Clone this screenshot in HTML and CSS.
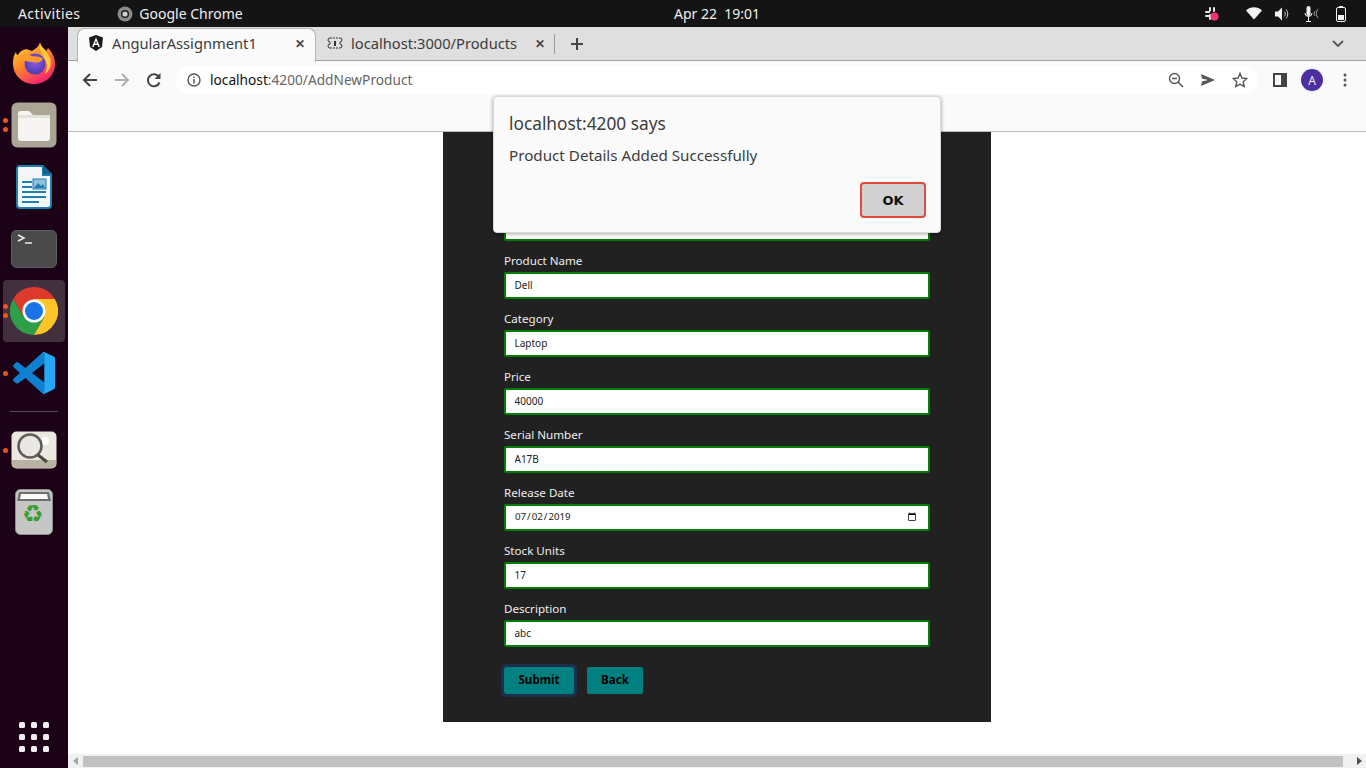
FILE: index.html
```html
<!DOCTYPE html>
<html lang="en">
<head>
  <meta charset="UTF-8">
  <title>AngularAssignment1</title>
  <link rel="stylesheet" href="styles.css">
</head>
<body>
  <header class="topbar">
    <div class="topbar-left">
      <span class="activities">Activities</span>
      <span class="app-name">
        <svg class="app-icon" width="16" height="16" viewBox="0 0 16 16"><circle cx="8" cy="8" r="7.5" fill="#8a8a8a"/><circle cx="8" cy="8" r="4" fill="#1a1a1a"/><circle cx="8" cy="8" r="2.6" fill="#cfcfcf"/></svg>
        Google Chrome
      </span>
    </div>
    <div class="clock">Apr 22&nbsp;&nbsp;19:01</div>
    <div class="tray">
      <svg class="tray-slack" width="16" height="16" viewBox="0 0 16 16"><g stroke="#e8e8e8" stroke-width="2" stroke-linecap="round"><path d="M6 2v2.500M2 6h3M10 2v3M2 10h3M6 9v4"/></g><circle cx="10.500" cy="10.500" r="4" fill="#f0337a"/></svg>
      <svg class="tray-wifi" width="16" height="13" viewBox="0 0 16 13"><path d="M0 3.500C4.500-.8 11.500-.8 16 3.500L8 12.500z" fill="#f2f2f2"/></svg>
      <svg class="tray-vol" width="15" height="14" viewBox="0 0 15 14"><path d="M0 4.500h3l4-4v13l-4-4H0z" fill="#f2f2f2"/><path d="M9 4.500a3 3 0 0 1 0 5M11 2.500a6.500 6.500 0 0 1 0 9" fill="none" stroke="#cfcfcf"/></svg>
      <svg class="tray-mic" width="17" height="16" viewBox="0 0 17 16"><rect x="2.500" y="0" width="4" height="10" rx="2" fill="#f2f2f2"/><path d="M1 7a3.500 3.500 0 0 0 7 0M4.500 10.500V15M2 15.500h5" fill="none" stroke="#f2f2f2"/><path d="M11 5a4 4 0 0 0 0 5M14 3a7 7 0 0 0 0 9" fill="none" stroke="#9a9a9a"/></svg>
      <svg class="tray-bat" width="10" height="16" viewBox="0 0 10 16"><rect x="3" y="0" width="4" height="2" fill="#f2f2f2"/><rect x=".5" y="1.500" width="9" height="14" rx="1.500" fill="none" stroke="#f2f2f2"/><rect x="2" y="9" width="6" height="5" fill="#f2f2f2"/></svg>
    </div>
  </header>

  <div class="desktop">
    <nav class="dock">
      <div class="dock-item">
        <svg width="44" height="46" viewBox="0 0 44 46">
          <defs>
            <linearGradient id="fx-a" x1="0" y1="0" x2="0.6" y2="1"><stop offset="0" stop-color="#ffd93b"/><stop offset=".5" stop-color="#ff8a2a"/><stop offset="1" stop-color="#f5256e"/></linearGradient>
            <radialGradient id="fx-b" cx=".5" cy=".4" r=".6"><stop offset="0" stop-color="#8f5be8"/><stop offset="1" stop-color="#4a3bb0"/></radialGradient>
          </defs>
          <path d="M28 2c1 4 3 6 7 9 0 0 0-2 1-3 5 5 7 11 7 16 0 11-9 20-21 20S1 35 1 23c0-5 1-8 3-11 0 2 1 3 2 3 2-4 5-5 8-6 2 1 4 1 6 2 3-2 7-4 8-9z" fill="url(#fx-a)"/>
          <circle cx="23" cy="24" r="10.500" fill="url(#fx-b)"/>
          <path d="M6 17c4-3 9-3 14-1 4 1 9 0 11 3-3 4-6 4-10 3-4 0-9-1-15-5z" fill="#ff9a2e"/>
          <path d="M28 4c2 5 7 7 10 14 2 6 0 13-5 16 3-6 2-12-1-16-2-4-5-8-4-14z" fill="#ffc93a"/>
        </svg>
      </div>
      <div class="dock-item running-2">
        <svg width="46" height="46" viewBox="0 0 46 46"><rect x="0.500" y="0.500" width="45" height="45" rx="6" fill="#aaa595"/><path d="M7 12a3 3 0 0 1 3-3h8l4 4h14a3 3 0 0 1 3 3v20a3 3 0 0 1-3 3H10a3 3 0 0 1-3-3z" fill="#f6f5f3"/><path d="M7 13h32v3H7z" fill="#e4e1da"/></svg>
      </div>
      <div class="dock-item">
        <svg width="38" height="46" viewBox="0 0 38 46"><path d="M4 1h24l9 9v31a4 4 0 0 1-4 4H5a4 4 0 0 1-4-4V4a4 4 0 0 1 3-3z" fill="#1f7fb0"/><path d="M4 3h23v9h8v29a2 2 0 0 1-2 2H5a2 2 0 0 1-2-2V5a2 2 0 0 1 1-2z" fill="#f5f8fa"/><path d="M28 1l9 9h-9z" fill="#14618a"/><path d="M7 17h10v2H7zM7 22h10v2H7zM7 27h24v2H7zM7 32h24v2H7zM7 37h17v2H7z" fill="#1f7fb0"/><rect x="18" y="15" width="13" height="10" fill="#8fc0dc" stroke="#1f7fb0"/><path d="M19 24l4-5 3 3 2-2 2 4z" fill="#1f7fb0"/></svg>
      </div>
      <div class="dock-item">
        <svg width="46" height="38" viewBox="0 0 46 38"><rect x="0.500" y="0.500" width="45" height="37" rx="5" fill="#4a4a4a" stroke="#5f5f5f"/><path d="M7 5l6 3-6 3" fill="none" stroke="#eee" stroke-width="1.500"/><path d="M14 13h7" stroke="#eee" stroke-width="1.500"/></svg>
      </div>
      <div class="dock-item active running-2">
        <svg width="48" height="48" viewBox="0 0 48 48"><path d="M24 24V12H44.800A24 24 0 0 0 3.200 12L13.600 30z" fill="#db3a2d"/><path d="M24 24L13.600 30 3.200 12A24 24 0 0 0 24 48L34.400 30z" fill="#2f9e48"/><path d="M24 24L34.400 30 24 48A24 24 0 0 0 44.800 12H24z" fill="#fcc528"/><circle cx="24" cy="24" r="11.500" fill="#fff"/><circle cx="24" cy="24" r="9" fill="#1a73e8"/></svg>
      </div>
      <div class="dock-item running-1">
        <svg width="42" height="42" viewBox="0 0 100 100"><path d="M96.500 10.800L75.900.9a6.200 6.200 0 0 0-7.100 1.200L29.600 37.800 12.500 24.900a4.200 4.200 0 0 0-5.300.2L1.700 30.100a4.200 4.200 0 0 0 0 6.200L16.500 49.800 1.700 63.300a4.200 4.200 0 0 0 0 6.200l5.500 5a4.200 4.200 0 0 0 5.300.2l17.100-13 39.200 35.700a6.200 6.200 0 0 0 7.100 1.200l20.600-9.900A6.300 6.300 0 0 0 100 83V16.600a6.300 6.300 0 0 0-3.500-5.800zM75 72.500L45.300 49.800 75 27z" fill="#0f7fd0"/><path d="M75.900.9L96.500 10.800A6.300 6.300 0 0 1 100 16.600V83a6.300 6.300 0 0 1-3.500 5.600L75.900 98.900A6.200 6.200 0 0 1 71 99.300 7 7 0 0 0 75 93V7A7 7 0 0 0 71 .7a6.200 6.200 0 0 1 4.900.2z" fill="#26a9f4"/></svg>
      </div>
      <div class="dock-sep"></div>
      <div class="dock-item running-1">
        <svg width="46" height="38" viewBox="0 0 46 38"><rect x="0.500" y="0.500" width="45" height="37" rx="5" fill="#ece8df"/><path d="M1 29h44v4a4 4 0 0 1-4 4H5a4 4 0 0 1-4-4z" fill="#b8b3a2"/><circle cx="34" cy="10" r="4" fill="#fff"/><circle cx="19" cy="15" r="11.500" fill="#e8e8e6" fill-opacity=".4" stroke="#5c5c5c" stroke-width="2.500"/><path d="M27 24l9 7" stroke="#4a4a4a" stroke-width="3"/></svg>
      </div>
      <div class="dock-item trash">
        <svg width="38" height="46" viewBox="0 0 38 46"><rect x="0.500" y="0.500" width="37" height="45" rx="5" fill="#c6c6c4" stroke="#8e8e8c"/><path d="M4 3h30l2 9H2z" fill="#6e6e6c"/><path d="M6 5h26l1 5H5z" fill="#fafafa"/></svg>
        <span class="recycle">♻</span>
      </div>
      <div class="dock-grid">
        <i></i><i></i><i></i><i></i><i></i><i></i><i></i><i></i><i></i>
      </div>
    </nav>

    <div class="browser">
      <div class="tabstrip">
        <div class="tab tab-active">
          <svg width="16" height="16" viewBox="0 0 16 16"><path d="M8 0L1 2.500 2 12l6 4 6-4 1-9.500z" fill="#1a1a1a"/><path d="M8 2.500L4 12h1.500l.8-2h3.400l.8 2H12zM6.900 8.600L8 5.800l1.100 2.800z" fill="#fff"/></svg>
          <span class="tab-title">AngularAssignment1</span>
          <span class="tab-close">✕</span>
        </div>
        <div class="tab tab-second">
          <svg width="16" height="16" viewBox="0 0 16 16"><path d="M3 3h10M3 13h10" stroke="#333" stroke-dasharray="2 1"/><path d="M3 3a2 2 0 0 0 0 4v2a2 2 0 0 0 0 4M13 3a2 2 0 0 1 0 4v2a2 2 0 0 1 0 4" fill="none" stroke="#333"/><path d="M7 6h2v5H7z" fill="#333"/></svg>
          <span class="tab-title">localhost:3000/Products</span>
          <span class="tab-close">✕</span>
        </div>
        <div class="tab-sep"></div>
        <svg class="new-tab" width="14" height="14" viewBox="0 0 14 14"><path d="M7 1v12M1 7h12" stroke="#444" stroke-width="2"/></svg>
        <svg class="tab-menu" width="12" height="8" viewBox="0 0 12 8"><path d="M1 1l5 5 5-5" fill="none" stroke="#555" stroke-width="1.800"/></svg>
      </div>

      <div class="toolbar">
        <svg width="16" height="16" viewBox="0 0 16 16"><path d="M15 8H2M8 2L2 8l6 6" fill="none" stroke="#444" stroke-width="2"/></svg>
        <svg width="16" height="16" viewBox="0 0 16 16"><path d="M1 8h13M8 2l6 6-6 6" fill="none" stroke="#b0b0b0" stroke-width="2"/></svg>
        <svg width="16" height="16" viewBox="0 0 16 16"><path d="M13.500 10.500A6 6 0 1 1 13 5" fill="none" stroke="#444" stroke-width="2"/><path d="M14.500 1v6h-6z" fill="#444"/></svg>
        <div class="omnibox">
          <svg width="14" height="14" viewBox="0 0 14 14"><circle cx="7" cy="7" r="6" fill="none" stroke="#555" stroke-width="1.400"/><path d="M7 6v4.500M7 3.500v1.500" stroke="#555" stroke-width="1.500"/></svg>
          <span class="url"><b>localhost</b>:4200/AddNewProduct</span>
          <svg width="16" height="16" viewBox="0 0 16 16"><circle cx="6.500" cy="6.500" r="5" fill="none" stroke="#555" stroke-width="1.400"/><path d="M4 6.500h5M10 10l5 5" stroke="#555" stroke-width="1.500"/></svg>
          <svg width="16" height="14" viewBox="0 0 16 14"><path d="M1 1l14 6-14 6 1-4.500L8 7 2 5.500z" fill="#555"/></svg>
          <svg width="16" height="16" viewBox="0 0 16 16"><path d="M8 1.500l2 4.500 4.800.5-3.600 3.200 1 4.800L8 12.100l-4.200 2.400 1-4.800L1.200 6.500 6 6z" fill="none" stroke="#555" stroke-width="1.400"/></svg>
        </div>
        <svg width="14" height="14" viewBox="0 0 14 14"><path d="M0 0h14v14H0z" fill="#444"/><path d="M2 2h6v10H2z" fill="#fafafa"/></svg>
        <span class="avatar">A</span>
        <svg class="chrome-menu" width="4" height="14" viewBox="0 0 4 14"><circle cx="2" cy="2" r="1.500" fill="#555"/><circle cx="2" cy="7" r="1.500" fill="#555"/><circle cx="2" cy="12" r="1.500" fill="#555"/></svg>
      </div>

      <div class="page">
        <div class="page-nav"></div>
        <form class="product-form">
          <div class="field"><label>Product ID</label><input type="text" value="1"></div>
          <div class="field"><label>Product Name</label><input type="text" value="Dell"></div>
          <div class="field"><label>Category</label><input type="text" value="Laptop"></div>
          <div class="field"><label>Price</label><input type="text" value="40000"></div>
          <div class="field"><label>Serial Number</label><input type="text" value="A17B"></div>
          <div class="field"><label>Release Date</label><input class="date-input" type="date" value="2019-07-02"></div>
          <div class="field"><label>Stock Units</label><input type="text" value="17"></div>
          <div class="field"><label>Description</label><input type="text" value="abc"></div>
          <div class="form-buttons">
            <button type="button" class="btn btn-submit">Submit</button>
            <button type="button" class="btn btn-back">Back</button>
          </div>
        </form>
      </div>

      <div class="scrollbar">
        <span class="arrow-left"></span>
        <span class="thumb"></span>
        <span class="arrow-right"></span>
      </div>
    </div>
  </div>

  <div class="alert">
    <div class="alert-title">localhost:4200 says</div>
    <div class="alert-msg">Product Details Added Successfully</div>
    <div class="alert-actions"><button type="button" class="alert-ok">OK</button></div>
  </div>
</body>
</html>
```
FILE: styles.css
```css
* {
  box-sizing: border-box;
}
html, body {
  margin: 0;
  height: 768px;
  overflow: hidden;
}
body {
  font-family: "Noto Sans", "Open Sans", sans-serif;
  position: relative;
}

/* gnome bar */
.topbar {
  height: 27px;
  background: #141414;
  color: #eee;
  font-size: 14px;
  display: grid;
  grid-template-columns: 656px auto 1fr;
  align-items: center;
  padding: 0 20px 0 18px;
}
.topbar-left {
  display: flex;
  align-items: center;
  gap: 37px;
}
.activities {
  letter-spacing: 0.4px;
}
.app-name {
  display: flex;
  align-items: center;
  gap: 6px;
}
.tray {
  display: flex;
  align-items: center;
  justify-content: flex-end;
}
.tray-slack { margin-right: 26px; }
.tray-wifi { margin-right: 13px; }
.tray-vol { margin-right: 14px; }
.tray-mic { margin-right: 15px; }

.desktop {
  display: flex;
  height: 741px;
}

/* dock */
.dock {
  width: 68px;
  background: #1b0217;
  display: flex;
  flex-direction: column;
  align-items: center;
  padding-top: 5px;
}
.dock-item {
  width: 62px;
  height: 62px;
  display: flex;
  align-items: center;
  justify-content: center;
  position: relative;
  border-radius: 4px;
  flex: none;
}
.dock-item.active {
  background: #43303f;
}
.running-1::before,
.running-2::before,
.running-2::after {
  content: "";
  position: absolute;
  left: 0;
  width: 5px;
  height: 5px;
  border-radius: 50%;
  background: #e95420;
}
.running-1::before { top: 29px; }
.running-2::before { top: 24px; }
.running-2::after { top: 33px; }
.recycle {
  position: absolute;
  top: 19px;
  left: 19px;
  font-family: "DejaVu Sans", sans-serif;
  font-size: 24px;
  line-height: 28px;
  color: #3d9a35;
}
.dock-sep {
  width: 48px;
  height: 1px;
  background: #5a4a57;
  margin: 7px 0;
  flex: none;
}
.dock-grid {
  margin-top: auto;
  margin-bottom: 16px;
  display: grid;
  grid-template-columns: repeat(3, 6px);
  gap: 6px;
}
.dock-grid i {
  width: 6px;
  height: 6px;
  border-radius: 1.5px;
  background: #f0eef0;
}

/* chrome */
.browser {
  flex: 1;
  display: flex;
  flex-direction: column;
  min-width: 0;
}
.tabstrip {
  height: 34px;
  background: #dfdfdf;
  border-bottom: 1px solid #a3a3a3;
  display: flex;
  align-items: center;
  padding-left: 9px;
  color: #3c3c3c;
  font-size: 14.7px;
}
.tab {
  width: 239px;
  height: 33px;
  display: flex;
  align-items: center;
  padding: 0 10px 1px 11px;
  gap: 8px;
}
.tab-second {
  width: 238px;
  padding-right: 9px;
}
.tab-active {
  background: #fafafa;
  border: 1px solid #b5b5b5;
  border-bottom: none;
  border-radius: 8px 8px 0 0;
  height: 34px;
  padding-left: 10px;
  padding-bottom: 4px;
  position: relative;
  top: 1px;
}
.tab-title {
  flex: 1;
}
.tab-close {
  font-size: 12px;
  font-weight: bold;
  color: #444;
}
.tab-sep {
  width: 1px;
  height: 20px;
  background: #9a9a9a;
}
.new-tab {
  margin-left: 15px;
}
.tab-menu {
  margin-left: auto;
  margin-right: 22px;
}
.toolbar {
  height: 39px;
  background: #fafafa;
  display: flex;
  align-items: center;
  padding: 0 0 1px 14px;
  gap: 16px;
  font-size: 14px;
}
.omnibox {
  width: 1082px;
  height: 30px;
  margin-left: -2px;
  margin-right: -1px;
  background: #fff;
  border-radius: 15px;
  display: flex;
  align-items: center;
  padding: 0 10px 0 11px;
  gap: 16px;
}
.url {
  flex: 1;
  margin: 0 0 2px -7px;
  font-size: 13.7px;
  color: #666;
}
.url b {
  font-weight: normal;
  color: #111;
}
.avatar {
  width: 22px;
  height: 22px;
  border-radius: 50%;
  background: #4c2ea0;
  color: #eee;
  font-size: 12px;
  display: flex;
  align-items: center;
  justify-content: center;
  margin-left: -2px;
}
.chrome-menu {
  margin-left: 4px;
}

/* page */
.page {
  flex: 1;
  background: #fff;
  display: flex;
  flex-direction: column;
  align-items: center;
}
.page-nav {
  width: 100%;
  height: 32px;
  background: #fafafa;
  border-bottom: 1px solid #bbb;
  flex: none;
}
.product-form {
  width: 548px;
  height: 590px;
  background: #212121;
  padding: 65px 61px 0;
  color: #eee;
  font-size: 11.6px;
}
.field {
  height: 58px;
}
.field label {
  display: block;
  height: 17px;
  line-height: 11px;
}
.field input {
  width: 426px;
  height: 27px;
  border: 2px solid #008000;
  border-radius: 2px;
  background: #fff;
  color: #222;
  padding: 0 9px 2px 8.5px;
  font-family: inherit;
  font-size: 10px;
  display: block;
}
.field .date-input {
  padding-left: 8px;
  font-size: 9.7px;
}
.form-buttons {
  display: flex;
  gap: 13px;
  margin-top: 6px;
}
.btn {
  height: 27px;
  padding: 0 0 2px;
  background: #008080;
  color: #000;
  border: none;
  border-radius: 2px;
  font-family: inherit;
  font-size: 11.6px;
  font-weight: bold;
}
.btn-submit {
  width: 70px;
  outline: 3px solid #1c2f4d;
}
.btn-back {
  width: 56px;
}

.scrollbar {
  height: 14px;
  background: #f1f1f1;
  display: flex;
  align-items: center;
  padding-left: 5px;
}
.arrow-left {
  border-right: 5px solid #a3a3a3;
  border-top: 4px solid transparent;
  border-bottom: 4px solid transparent;
}
.thumb {
  width: 1260px;
  height: 11px;
  margin-left: 5px;
  background: #c1c1c1;
}
.arrow-right {
  margin-left: 14px;
  border-left: 5px solid #505050;
  border-top: 4px solid transparent;
  border-bottom: 4px solid transparent;
}

/* the alert box lies over the page */
.alert {
  position: absolute;
  left: 493px;
  top: 96px;
  width: 448px;
  height: 137px;
  background: #fafafa;
  border: 1px solid #d8d8d8;
  border-radius: 4px;
  box-shadow: 0 1px 4px rgba(0, 0, 0, 0.35);
  padding: 15px 14px 0 15px;
  color: #3d3d3d;
}
.alert-title {
  font-size: 17.3px;
  line-height: 24px;
}
.alert-msg {
  font-size: 15.2px;
  line-height: 20px;
  margin-top: 9px;
}
.alert-actions {
  display: flex;
  justify-content: flex-end;
  margin-top: 17px;
}
.alert-ok {
  width: 66px;
  height: 36px;
  background: #d1d1d1;
  border: 2px solid #e24a3b;
  border-radius: 4px;
  color: #111;
  font-family: "DejaVu Sans", sans-serif;
  font-size: 13px;
  font-weight: bold;
}
```
